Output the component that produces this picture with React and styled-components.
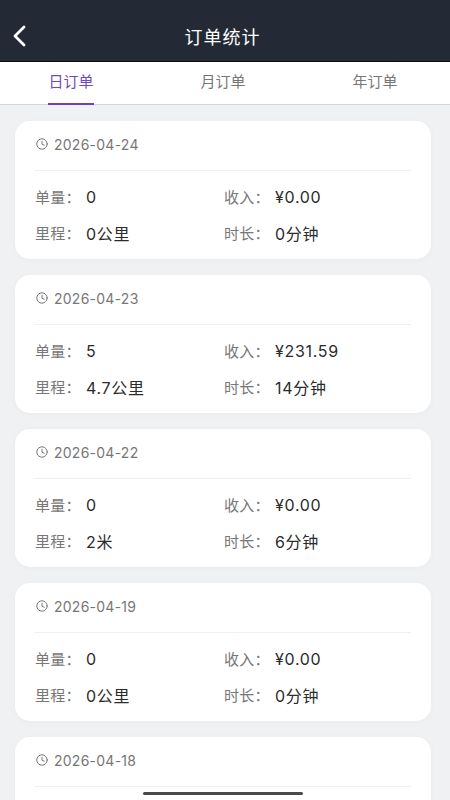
import styled, { createGlobalStyle } from "styled-components"

const GlobalStyle = createGlobalStyle`
    html, body {
        margin: 0;
        padding: 0;
        height: 100%;
        overflow: hidden;
        background: #f0f1f3;
    }
    * {
        box-sizing: border-box;
    }
    body {
        font-family: Inter, "Noto Sans CJK SC", sans-serif;
    }
`

const days = [
    { date: "2026-04-24", count: "0", income: "¥0.00", distance: "0公里", duration: "0分钟" },
    { date: "2026-04-23", count: "5", income: "¥231.59", distance: "4.7公里", duration: "14分钟" },
    { date: "2026-04-22", count: "0", income: "¥0.00", distance: "2米", duration: "6分钟" },
    { date: "2026-04-19", count: "0", income: "¥0.00", distance: "0公里", duration: "0分钟" },
    { date: "2026-04-18", count: "0", income: "¥0.00", distance: "0公里", duration: "0分钟" },
]

const Page = styled.div`
    position: relative;
    width: 450px;
    height: 800px;
    overflow: hidden;
    display: flex;
    flex-direction: column;
    background: #f0f1f3;
`

const Header = styled.header`
    flex: none;
    height: 62px;
    padding: 11px 5px 0 0;
    display: grid;
    grid-template-columns: 60px 1fr 60px;
    align-items: center;
    background: #232a36;
    border-bottom: 1px solid #0b0d12;
`

const BackButton = styled.button`
    display: flex;
    padding: 0 0 0 12px;
    border: none;
    background: none;
    color: #fff;
`

const Title = styled.h1`
    margin: 0;
    text-align: center;
    font-size: 18px;
    font-weight: 400;
    letter-spacing: 1px;
    color: #fff;
`

const Tabs = styled.nav`
    flex: none;
    height: 43px;
    padding: 0 52px 0 48px;
    display: flex;
    justify-content: space-between;
    background: #fff;
    border-bottom: 1px solid #d6d6dc;
`

const Tab = styled.div`
    width: 46px;
    height: 43px;
    padding-top: 10px;
    text-align: center;
    white-space: nowrap;
    font-size: 15px;
    line-height: 20px;
    color: ${({ $active }) => ($active ? "#7248c0" : "#777")};
    border-bottom: 2px solid ${({ $active }) => ($active ? "#6a3fc4" : "transparent")};
`

const List = styled.main`
    flex: 1;
    min-height: 0;
    padding: 16px 19px 0 15px;
    display: flex;
    flex-direction: column;
    gap: 16px;
    overflow: hidden;
`

const Card = styled.section`
    flex: none;
    height: 138px;
    padding: 0 20px 0 19px;
    background: #fff;
    border-radius: 15px;
    box-shadow: 0 1px 6px rgba(30, 35, 50, 0.03);
`

const CardHead = styled.div`
    height: 50px;
    display: flex;
    align-items: center;
    gap: 6px;
    padding: 0 0 3px 2px;
    font-size: 14px;
    letter-spacing: 0.25px;
    color: #777;
    border-bottom: 1px solid #f0f0f2;
`

const Stats = styled.div`
    padding-top: 8px;
    display: grid;
    grid-template-columns: 189px 1fr;
    grid-auto-rows: 36px;
`

const Stat = styled.div`
    display: flex;
    align-items: center;
    padding-left: 1px;
    font-size: 15px;
`

const Label = styled.span`
    width: 51px;
    flex: none;
    margin-top: -1px;
    letter-spacing: 0.3px;
    color: #777;
`

const Value = styled.span`
    margin-top: -1px;
    font-size: 16px;
    letter-spacing: 0.7px;
    color: #2b2b2b;
`

const HomeBar = styled.div`
    position: absolute;
    left: 143px;
    bottom: 5px;
    width: 160px;
    height: 3px;
    border-radius: 2px;
    background: #4a4a4c;
`

const BackIcon = () => (
    <svg width="16" height="22" viewBox="0 0 16 22" fill="none" stroke="currentColor" strokeWidth="2.8" strokeLinecap="round" strokeLinejoin="round">
        <path d="M12 2 L3 11 L12 20" />
    </svg>
)

const ClockIcon = () => (
    <svg width="12" height="12" viewBox="0 0 12 12" fill="none" stroke="#777" strokeWidth="1" strokeLinecap="round" strokeLinejoin="round">
        <circle cx="6" cy="6" r="5.2" />
        <path d="M6 3.2 V6.3 L8.2 7.2" />
    </svg>
)

const DayCard = ({ day }) => (
    <Card>
        <CardHead>
            <ClockIcon />
            {day.date}
        </CardHead>
        <Stats>
            <Stat><Label>单量：</Label><Value>{day.count}</Value></Stat>
            <Stat><Label>收入：</Label><Value>{day.income}</Value></Stat>
            <Stat><Label>里程：</Label><Value>{day.distance}</Value></Stat>
            <Stat><Label>时长：</Label><Value>{day.duration}</Value></Stat>
        </Stats>
    </Card>
)

export default function App() {
    return (
        <Page>
            <GlobalStyle />
            <Header>
                <BackButton aria-label="返回"><BackIcon /></BackButton>
                <Title>订单统计</Title>
            </Header>
            <Tabs>
                <Tab $active>日订单</Tab>
                <Tab>月订单</Tab>
                <Tab>年订单</Tab>
            </Tabs>
            <List>
                {days.map(day => <DayCard key={day.date} day={day} />)}
            </List>
            <HomeBar />
        </Page>
    )
}
